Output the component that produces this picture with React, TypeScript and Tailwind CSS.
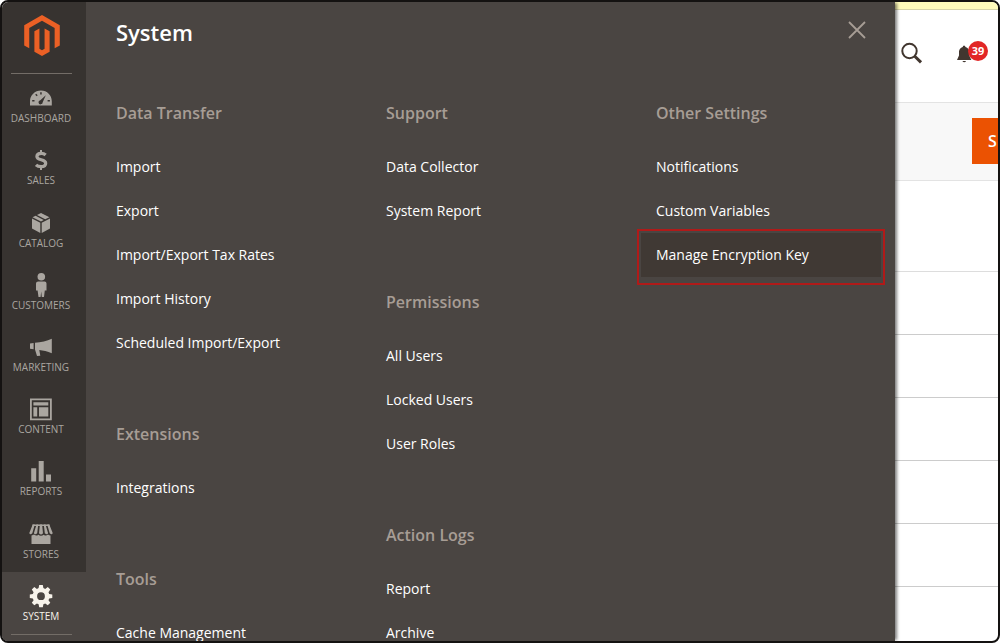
import { ReactNode } from "react";
import clsx from "clsx";

type NavItem = { label: string; icon: ReactNode; active?: boolean };
type MenuLink = { label: string; highlighted?: boolean };
type MenuGroup = { title: string; links: MenuLink[] };

function Icon({ children }: { children: ReactNode }) {
  return (
    <svg
      width="24"
      height="24"
      viewBox="0 0 24 24"
      fill="currentColor"
      aria-hidden="true"
    >
      {children}
    </svg>
  );
}

const NAV_ITEMS: NavItem[] = [
  {
    label: "Dashboard",
    icon: (
      <Icon>
        <path
          fillRule="evenodd"
          d="M12 4.5C5.8 4.5 1 9.300 1 15.300V19.500H22.800V15.300C22.800 9.300 18.200 4.500 12 4.500ZM16.800 9.200L13.700 16.200A2.100 2.100 0 1 1 11.300 14.200ZM11.200 6.300h1.500v2.200h-1.500ZM6.200 8.700l1-1 1.500 1.500-1 1ZM3.200 14h2.300v1.500H3.200ZM18.600 14h2.300v1.500h-2.300Z"
        />
      </Icon>
    ),
  },
  {
    label: "Sales",
    icon: (
      <Icon>
        <path
          d="M16.600 7C15.500 5.900 13.900 5.300 12.200 5.300C9.600 5.300 7.900 6.400 7.900 8.400C7.900 12.900 16.700 10.500 16.700 15.200C16.700 17.600 14.700 18.600 12.100 18.600C10.100 18.600 8.200 18 7 16.800"
          fill="none"
          stroke="currentColor"
          strokeWidth="3.200"
        />
        <path d="M11 2H13V5H11ZM11 19H13V22H11Z" />
      </Icon>
    ),
  },
  {
    label: "Catalog",
    icon: (
      <Icon>
        <path d="M11.300 11.700V22L3 17.500V7.600ZM12.700 11.700V22L21 17.500V7.600ZM3.500 6.200L6.600 4.700L14.700 9L12 10.500ZM8 4L12 1.900L20.500 6.200L16.200 8.300Z" />
      </Icon>
    ),
  },
  {
    label: "Customers",
    icon: (
      <Icon>
        <circle cx="12.300" cy="3.800" r="3.800" />
        <path d="M9.200 8.500H15.500Q17.500 8.500 17.500 10.500V17.500H15.800L15 24H12.800L12.200 18.500L11.600 24H9.500L8.600 17.500H7V10.500Q7 8.500 9.200 8.500Z" />
      </Icon>
    ),
  },
  {
    label: "Marketing",
    icon: (
      <Icon>
        <path d="M1 8.500L4.600 8V14.200L1 13.700ZM6 7.700C12 7.500 18 6 22.800 3.800V18.300C18.500 16.300 14 15.200 10.300 14.900L11.300 20.700L8 21L6 14.500Z" />
      </Icon>
    ),
  },
  {
    label: "Content",
    icon: (
      <Icon>
        <path
          fillRule="evenodd"
          d="M1 1.500H22.800V23.300H1ZM2.800 3.300V21.500H21V3.300ZM4.400 5.200H19.300V8.600H4.400ZM4.400 10.200H8.200V19.600H4.400ZM10 10.200H19.300V19.600H10Z"
        />
      </Icon>
    ),
  },
  {
    label: "Reports",
    icon: (
      <Icon>
        <path d="M2.200 9.200H7.200V22.500H2.200ZM9.700 2H14.700V22.500H9.700ZM17 15.500H22V22.500H17Z" />
      </Icon>
    ),
  },
  {
    label: "Stores",
    icon: (
      <Icon>
        <path d="M3.700 2.500H5.800L3.300 11.200Q1 13.500.300 11ZM7.500 2.500H9.200L8.200 11.200Q6 13.500 4.900 11.200ZM10.900 2.500H13.100L14 11.200Q12 13.600 10 11.200ZM14.800 2.500H16.500L19.100 11.200Q18 13.500 15.800 11.200ZM18.200 2.500H20.300L23.700 11Q23 13.500 20.700 11.200Z" />
        <path d="M2.500 13.500Q4.200 13.200 5 12.500Q7.500 14.600 9.200 12.700Q12 15 14.800 12.700Q17 14.600 19 12.500Q20 13.400 21.500 13.500V22H2.500ZM3.500 2.500H20.500V3.900H3.500Z" />
      </Icon>
    ),
  },
  {
    label: "System",
    active: true,
    icon: (
      <Icon>
        <path
          fillRule="evenodd"
          d="M10.200 1H13.800L14.400 4.100L16.200 4.900L18.800 3.100L21.300 5.600L19.500 8.200L20.200 9.900L23.300 10.500V13.900L20.200 14.500L19.500 16.200L21.300 18.800L18.800 21.300L16.200 19.500L14.400 20.300L13.800 23.300H10.200L9.600 20.300L7.900 19.500L5.300 21.300L2.800 18.800L4.600 16.200L3.800 14.500L.800 13.900V10.500L3.800 9.900L4.600 8.200L2.800 5.600L5.300 3.100L7.900 4.900L9.600 4.100ZM12 8.300A3.900 3.900 0 1 0 12 16.100A3.900 3.900 0 1 0 12 8.300Z"
        />
      </Icon>
    ),
  },
];

const MENU_COLUMNS: MenuGroup[][] = [
  [
    {
      title: "Data Transfer",
      links: [
        { label: "Import" },
        { label: "Export" },
        { label: "Import/Export Tax Rates" },
        { label: "Import History" },
        { label: "Scheduled Import/Export" },
      ],
    },
    { title: "Extensions", links: [{ label: "Integrations" }] },
    { title: "Tools", links: [{ label: "Cache Management" }] },
  ],
  [
    {
      title: "Support",
      links: [{ label: "Data Collector" }, { label: "System Report" }],
    },
    {
      title: "Permissions",
      links: [
        { label: "All Users" },
        { label: "Locked Users" },
        { label: "User Roles" },
      ],
    },
    {
      title: "Action Logs",
      links: [{ label: "Report" }, { label: "Archive" }],
    },
  ],
  [
    {
      title: "Other Settings",
      links: [
        { label: "Notifications" },
        { label: "Custom Variables" },
        { label: "Manage Encryption Key", highlighted: true },
      ],
    },
  ],
];

export default function App() {
  return (
    <div className="flex h-screen overflow-hidden rounded-lg border-2 border-[#141211] bg-white font-['Open_Sans',sans-serif]">
      <Sidebar />
      <SystemMenu />
      <PageBehind />
    </div>
  );
}

function Sidebar() {
  return (
    <aside className="flex w-[84px] shrink-0 flex-col bg-[#373330]">
      <a
        href="#"
        aria-label="Magento"
        className="mr-[14px] ml-[9px] flex h-[72px] justify-center border-b border-[#736d67] pt-[13px] text-[#eb6025]"
      >
        <svg width="36" height="41" viewBox="0 0 36 41.500" fill="currentColor">
          <path d="M18 0L0 10.300V30.800L5.100 33.700V13.200L18 5.900L30.800 13.200V33.700L36 30.800V10.300Z" />
          <path d="M20.600 34.100L18 35.600L15.400 34.100V13.600L10.300 16.500V37.100L18 41.500L25.700 37.100V16.500L20.600 13.600Z" />
        </svg>
      </a>
      <nav className="flex flex-1 flex-col">
        {NAV_ITEMS.map((item) => (
          <a
            key={item.label}
            href="#"
            className={clsx(
              "flex flex-1 flex-col items-center justify-center gap-0.5 pr-1.5 text-[10px] leading-3 uppercase",
              item.active ? "bg-[#4a4542] text-[#f7f3eb]" : "text-[#aaa6a0]"
            )}
          >
            {item.icon}
            {item.label}
          </a>
        ))}
      </nav>
      <div className="h-[7px] bg-[#4a4542]">
        <div className="mr-[14px] ml-[9px] border-t border-[#736d67]" />
      </div>
    </aside>
  );
}

function SystemMenu() {
  return (
    <section className="z-10 w-[809px] shrink-0 bg-[#4a4542] shadow-[3px_0_3px_-1px_#00000080]">
      <header className="flex items-start justify-between pt-[15px] pr-[29px] pl-[30px]">
        <h2 className="text-[22px] leading-[30px] font-semibold text-white">
          System
        </h2>
        <button type="button" aria-label="Close" className="pt-1 text-[#a79d95]">
          <svg width="18" height="18" viewBox="0 0 18 18" aria-hidden="true">
            <path
              d="M1 1L17 17M17 1L1 17"
              stroke="currentColor"
              strokeWidth="1.800"
            />
          </svg>
        </button>
      </header>
      <div className="-mr-px mt-[54px] grid grid-cols-3">
        {MENU_COLUMNS.map((groups, index) => (
          <div key={index} className="flex flex-col gap-[13px] px-[15px]">
            {groups.map((group) => (
              <MenuSection key={group.title} group={group} />
            ))}
          </div>
        ))}
      </div>
    </section>
  );
}

function MenuSection({ group }: { group: MenuGroup }) {
  return (
    <div className="pb-11">
      <h3 className="mb-5 px-[15px] text-base leading-6 font-semibold text-[#a79d95]">
        {group.title}
      </h3>
      <ul>
        {group.links.map((link) => (
          <li key={link.label} className="relative">
            <a
              href="#"
              className={clsx(
                "flex h-11 items-center px-[15px] text-sm text-white",
                link.highlighted && "bg-[#403934]"
              )}
            >
              {link.label}
            </a>
            {link.highlighted && (
              <span className="pointer-events-none absolute -inset-x-1 -top-1 -bottom-2 border-2 border-[#b01a19]" />
            )}
          </li>
        ))}
      </ul>
    </div>
  );
}

function PageBehind() {
  return (
    <main className="min-w-0 flex-1 overflow-hidden">
      <div className="h-2 border-b border-[#d8d5a8] bg-[#fffbbb]" />
      <header className="flex h-[92px] items-start justify-between pt-[31px] pr-2.5 pl-[5px]">
        <button type="button" aria-label="Search" className="text-[#41362f]">
          <svg width="24" height="24" viewBox="0 0 24 24" aria-hidden="true">
            <circle
              cx="9.500"
              cy="10"
              r="7.200"
              fill="none"
              stroke="currentColor"
              strokeWidth="2"
            />
            <path
              d="M14.500 15L21 21.300"
              stroke="currentColor"
              strokeWidth="3"
            />
          </svg>
        </button>
        <button
          type="button"
          aria-label="Notifications"
          className="relative h-6 w-[33px] text-[#41362f]"
        >
          <svg width="18" height="24" viewBox="0 0 18 24" aria-hidden="true">
            <path
              d="M9 4.500Q10.200 4.500 10.500 6Q14 7 14.300 10.500V14.500L16.300 19H2L4 14.500V10.500Q4.300 7 7.700 6Q8 4.500 9 4.500ZM7.300 20H11.200Q9.200 22.500 7.300 20Z"
              fill="currentColor"
            />
          </svg>
          <span className="absolute top-0 right-0 flex size-5 items-center justify-center rounded-full bg-[#e22626] text-[11px] font-bold text-white">
            39
          </span>
        </button>
      </header>
      <div className="flex h-[79px] items-center border-y border-[#e3e3e3] bg-[#f8f8f8] pb-0.5">
        <button
          type="button"
          className="ml-[77px] h-[46px] flex-1 bg-[#eb5202] pl-4 text-left text-base font-semibold text-white"
        >
          S
        </button>
      </div>
      <div className="h-[91px] border-b border-[#dddddd]" />
      {[1, 2, 3, 4, 5].map((row) => (
        <div key={row} className="h-[63px] border-b border-[#cccccc]" />
      ))}
    </main>
  );
}
